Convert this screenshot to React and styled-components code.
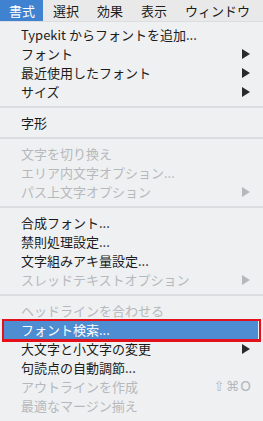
import React from "react";
import styled, { createGlobalStyle } from "styled-components";

const Global = createGlobalStyle`
  html, body { margin: 0; padding: 0; background: #eef0f2; }
  body { font-family: "Noto Sans CJK JP", "Noto Sans", sans-serif; -webkit-font-smoothing: antialiased; }
`;

const Screen = styled.div`
  width: 263px;
  height: 421px;
  overflow: hidden;
  background: #eef0f2;
  display: flex;
  flex-direction: column;
`;

const MenuBar = styled.div`
  height: 22px;
  flex: none;
  display: flex;
  background: #e9e9ea;
  border-bottom: 1px solid #dcdddf;
  box-sizing: border-box;
`;

const BarItem = styled.div`
  flex: none;
  box-sizing: border-box;
  padding-left: 9px;
  font-size: 13px;
  line-height: 22px;
  white-space: nowrap;
  color: ${(p) => (p.$active ? "#ffffff" : "#1c1c1c")};
  background: ${(p) => (p.$active ? "#3f82d0" : "transparent")};
  width: ${(p) => (p.$active ? "43px" : "44px")};
  margin-right: ${(p) => (p.$active ? "1px" : "0")};
`;

const Menu = styled.div`
  display: flex;
  flex-direction: column;
  padding-top: 3px;
`;

const Row = styled.div`
  position: relative;
  height: 19px;
  display: flex;
  align-items: center;
  padding: 0 12px 0 21px;
  font-size: 13px;
  line-height: 19px;
  white-space: nowrap;
  color: ${(p) => (p.$disabled ? "#b6b9bc" : p.$hl ? "#ffffff" : "#1c1c1c")};
  background: ${(p) => (p.$hl ? "#4e8dd2" : "transparent")};
  margin: ${(p) => (p.$hl ? "0 5px 0 4px" : "0")};
  padding-left: ${(p) => (p.$hl ? "17px" : "21px")};
  ${(p) =>
    p.$hl &&
    `
    &::after {
      content: "";
      position: absolute;
      left: -2px;
      right: -3px;
      top: -1px;
      bottom: -3px;
      border: 2px solid #e4101c;
      border-bottom-width: 3px;
    }
  `}
`;

const Label = styled.span`
  flex: 1;
`;

const Arrow = styled.span`
  width: 0;
  height: 0;
  margin-right: 1px;
  border-top: 5px solid transparent;
  border-bottom: 5px solid transparent;
  border-left: 8px solid ${(p) => (p.$disabled ? "#b6b9bc" : "#2a2a2a")};
`;

const Shortcut = styled.span`
  font-family: "DejaVu Sans", "Noto Sans CJK JP", sans-serif;
  font-size: 13.5px;
  letter-spacing: 1px;
  margin-right: -1px;
  color: inherit;
`;

const Separator = styled.div`
  height: 12px;
  display: flex;
  align-items: center;
  &::before {
    content: "";
    flex: 1;
    height: 2px;
    background: #dadcdf;
  }
`;

const groups = [
  [
    { t: "Typekit からフォントを追加..." },
    { t: "フォント", sub: true },
    { t: "最近使用したフォント", sub: true },
    { t: "サイズ", sub: true },
  ],
  [{ t: "字形" }],
  [
    { t: "文字を切り換え", d: true },
    { t: "エリア内文字オプション...", d: true },
    { t: "パス上文字オプション", d: true, sub: true },
  ],
  [
    { t: "合成フォント..." },
    { t: "禁則処理設定..." },
    { t: "文字組みアキ量設定..." },
    { t: "スレッドテキストオプション", d: true, sub: true },
  ],
  [
    { t: "ヘッドラインを合わせる", d: true },
    { t: "フォント検索...", hl: true },
    { t: "大文字と小文字の変更", sub: true },
    { t: "句読点の自動調節..." },
    { t: "アウトラインを作成", d: true, sc: "⇧⌘O" },
    { t: "最適なマージン揃え", d: true },
  ],
];

export default function App() {
  return (
    <Screen>
      <Global />
      <MenuBar>
        <BarItem $active>書式</BarItem>
        <BarItem>選択</BarItem>
        <BarItem>効果</BarItem>
        <BarItem>表示</BarItem>
        <BarItem>ウィンドウ</BarItem>
      </MenuBar>
      <Menu>
        {groups.map((g, gi) => (
          <React.Fragment key={gi}>
            {gi > 0 && <Separator />}
            {g.map((it) => (
              <Row key={it.t} $disabled={it.d} $hl={it.hl}>
                <Label>{it.t}</Label>
                {it.sub && <Arrow $disabled={it.d} />}
                {it.sc && <Shortcut>{it.sc}</Shortcut>}
              </Row>
            ))}
          </React.Fragment>
        ))}
      </Menu>
    </Screen>
  );
}
